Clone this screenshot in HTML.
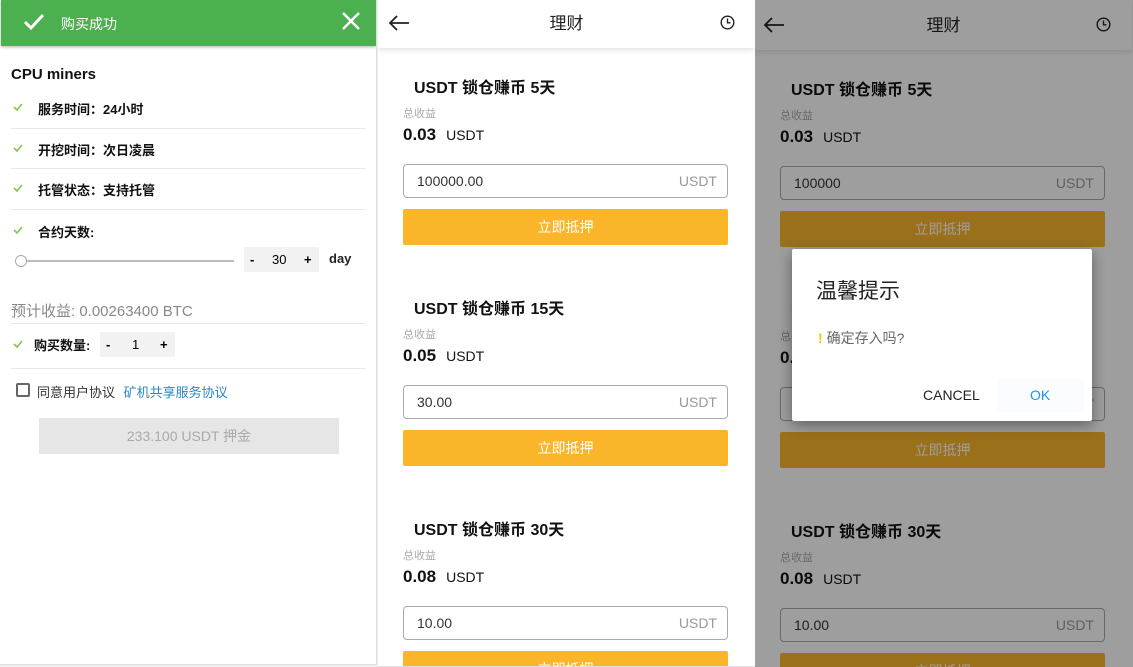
<!DOCTYPE html>
<html><head><meta charset="utf-8">
<style>
*{box-sizing:border-box;margin:0;padding:0}
body{width:1133px;height:667px;overflow:hidden;background:#f0f0f0;font-family:"Liberation Sans","Noto Sans CJK SC",sans-serif;position:relative}
.p{position:absolute;top:0;height:667px;background:#fff;overflow:hidden}
#L{left:0;width:377px;border-right:1px solid #ddd;border-bottom:1px solid #ddd;height:665px}
.gh{position:absolute;left:1px;top:0;width:375px;height:46px;background:#4caf50;box-shadow:0 1px 3px rgba(0,0,0,.3);color:#fff}
.gh .t{position:absolute;left:60px;top:14px;font-size:14px}
.row{position:absolute;left:11px;width:355px;font-size:13px;font-weight:bold;color:#111;border-bottom:1px solid #e8e8e8}
.ck{position:absolute;left:2px;width:10px;height:8px}
.row .tx{position:absolute;left:27px}
.stp{position:absolute;background:#f2f2f2;height:25px;font-size:13px;font-weight:bold}
.stp span{position:absolute;top:5px}
.card{position:absolute;left:25px;width:326px}
.ct{position:absolute;left:11px;font-size:16px;font-weight:bold;color:#111}
.cl{position:absolute;left:0;font-size:11px;color:#aaa}
.cv{position:absolute;left:0;font-size:14px;color:#111}
.cv b{font-size:17px;margin-right:10px}
.in{position:absolute;left:0;width:325px;height:34px;border:1px solid #aaa;border-radius:4px;font-size:14px}
.in .a{position:absolute;left:13px;top:8px;color:#333}
.in .u{position:absolute;right:10px;top:8px;color:#999}
.bt{position:absolute;left:0;width:325px;height:36px;background:#fbb52a;color:#fff;font-size:14px;text-align:center;line-height:36px;border-radius:2px}
.hd{position:absolute;left:0;top:0;width:377px;height:48px;background:#fff;box-shadow:0 2px 6px rgba(0,0,0,.12);z-index:2}
.hd .ti{position:absolute;left:0;width:377px;text-align:center;top:15px;font-size:17px;line-height:17px;color:#222}
</style></head><body>

<div class="p" id="L">
 <div class="gh">
  <svg style="position:absolute;left:22px;top:12px" width="22" height="20" viewBox="0 0 22 20"><path d="M2 10 L8 16 L20 3" stroke="#fff" stroke-width="3" fill="none"/></svg>
  <div class="t">购买成功</div>
  <svg style="position:absolute;left:341px;top:12px" width="18" height="18" viewBox="0 0 18 18"><path d="M1 1L17 17M17 1L1 17" stroke="#fff" stroke-width="2.5"/></svg>
 </div>
 <div style="position:absolute;left:11px;top:66px;font-size:15px;font-weight:bold;color:#111">CPU miners</div>
 <div class="row" style="top:96px;height:33px"><svg class="ck" style="top:7px" viewBox="0 0 10 8"><path d="M1 4L4 7L9 1" stroke="#8bc34a" stroke-width="1.6" fill="none"/></svg><span class="tx" style="top:3px">服务时间：24小时</span></div>
 <div class="row" style="top:137px;height:32px"><svg class="ck" style="top:7px" viewBox="0 0 10 8"><path d="M1 4L4 7L9 1" stroke="#8bc34a" stroke-width="1.6" fill="none"/></svg><span class="tx" style="top:3px">开挖时间：次日凌晨</span></div>
 <div class="row" style="top:177px;height:33px"><svg class="ck" style="top:7px" viewBox="0 0 10 8"><path d="M1 4L4 7L9 1" stroke="#8bc34a" stroke-width="1.6" fill="none"/></svg><span class="tx" style="top:3px">托管状态：支持托管</span></div>
 <div class="row" style="top:220px;height:20px;border:none"><svg class="ck" style="top:6px" viewBox="0 0 10 8"><path d="M1 4L4 7L9 1" stroke="#8bc34a" stroke-width="1.6" fill="none"/></svg><span class="tx" style="top:2px">合约天数:</span></div>
 <div style="position:absolute;left:20px;top:260px;width:214px;height:2px;background:#bbb"></div>
 <div style="position:absolute;left:15px;top:255px;width:12px;height:12px;border-radius:50%;border:1.5px solid #aaa;background:#fff"></div>
 <div class="stp" style="left:244px;top:247px;width:75px"><span style="left:6px">-</span><span style="left:28px;font-weight:normal">30</span><span style="left:60px">+</span></div>
 <div style="position:absolute;left:329px;top:251px;font-size:13px;font-weight:bold;color:#222">day</div>
 <div class="row" style="top:299px;height:25px;font-weight:normal;color:#888;font-size:15px;left:11px"><span style="position:absolute;left:0;top:1px">预计收益: 0.00263400 BTC</span></div>
 <div class="row" style="top:325px;height:44px"><svg class="ck" style="top:15px" viewBox="0 0 10 8"><path d="M1 4L4 7L9 1" stroke="#8bc34a" stroke-width="1.6" fill="none"/></svg><span class="tx" style="top:10px;left:23px">购买数量:</span></div>
 <div class="stp" style="left:100px;top:332px;width:75px"><span style="left:6px">-</span><span style="left:32px;font-weight:normal">1</span><span style="left:60px">+</span></div>
 <div style="position:absolute;left:16px;top:383px;width:14px;height:14px;border:2px solid #666;border-radius:2px"></div>
 <div style="position:absolute;left:37px;top:382px;font-size:13px;color:#333">同意用户协议 <span style="color:#2a86c8;margin-left:5px">矿机共享服务协议</span></div>
 <div style="position:absolute;left:39px;top:418px;width:300px;height:36px;background:#e6e6e6;color:#aaa;font-size:14px;text-align:center;line-height:36px">233.100 USDT 押金</div>
</div>

<div class="p" id="M" style="left:378px;width:377px;border-bottom:1px solid #e0e0e0">
 <div class="hd">
  <svg style="position:absolute;left:10px;top:14px" width="22" height="18" viewBox="0 0 22 18"><path d="M21 9H2M9 2L2 9L9 16" stroke="#222" stroke-width="1.8" fill="none"/></svg>
  <div class="ti">理财</div>
  <svg style="position:absolute;left:342px;top:15px" width="15" height="15" viewBox="0 0 15 15"><circle cx="7.5" cy="7.5" r="6.3" stroke="#222" stroke-width="1.4" fill="none"/><path d="M7.5 3.5V7.8H10.5" stroke="#222" stroke-width="1.4" fill="none"/></svg>
 </div>
 <div class="card" style="top:0"><div class="ct" style="top:74px">USDT 锁仓赚币 5天</div><div class="cl" style="top:105px">总收益</div><div class="cv" style="top:125px"><b>0.03</b>USDT</div><div class="in" style="top:164px"><span class="a">100000.00</span><span class="u">USDT</span></div><div class="bt" style="top:209px">立即抵押</div></div>
 <div class="card" style="top:221px"><div class="ct" style="top:74px">USDT 锁仓赚币 15天</div><div class="cl" style="top:105px">总收益</div><div class="cv" style="top:125px"><b>0.05</b>USDT</div><div class="in" style="top:164px"><span class="a">30.00</span><span class="u">USDT</span></div><div class="bt" style="top:209px">立即抵押</div></div>
 <div class="card" style="top:442px"><div class="ct" style="top:74px">USDT 锁仓赚币 30天</div><div class="cl" style="top:105px">总收益</div><div class="cv" style="top:125px"><b>0.08</b>USDT</div><div class="in" style="top:164px"><span class="a">10.00</span><span class="u">USDT</span></div><div class="bt" style="top:209px">立即抵押</div></div>
</div>

<div class="p" id="R" style="left:755px;width:378px">
 <div class="hd" style="height:50px">
  <svg style="position:absolute;left:8px;top:16px" width="22" height="18" viewBox="0 0 22 18"><path d="M21 9H2M9 2L2 9L9 16" stroke="#222" stroke-width="1.8" fill="none"/></svg>
  <div class="ti" style="top:17px">理财</div>
  <svg style="position:absolute;left:341px;top:17px" width="15" height="15" viewBox="0 0 15 15"><circle cx="7.5" cy="7.5" r="6.3" stroke="#222" stroke-width="1.4" fill="none"/><path d="M7.5 3.5V7.8H10.5" stroke="#222" stroke-width="1.4" fill="none"/></svg>
 </div>
 <div class="card" style="top:2px"><div class="ct" style="top:74px">USDT 锁仓赚币 5天</div><div class="cl" style="top:105px">总收益</div><div class="cv" style="top:125px"><b>0.03</b>USDT</div><div class="in" style="top:164px"><span class="a">100000</span><span class="u">USDT</span></div><div class="bt" style="top:209px">立即抵押</div></div>
 <div class="card" style="top:223px"><div class="ct" style="top:74px">USDT 锁仓赚币 15天</div><div class="cl" style="top:105px">总收益</div><div class="cv" style="top:125px"><b>0.05</b>USDT</div><div class="in" style="top:164px"><span class="a">30</span><span class="u">USDT</span></div><div class="bt" style="top:209px">立即抵押</div></div>
 <div class="card" style="top:444px"><div class="ct" style="top:74px">USDT 锁仓赚币 30天</div><div class="cl" style="top:105px">总收益</div><div class="cv" style="top:125px"><b>0.08</b>USDT</div><div class="in" style="top:164px"><span class="a">10.00</span><span class="u">USDT</span></div><div class="bt" style="top:209px">立即抵押</div></div>
 <div style="position:absolute;left:0;top:0;width:378px;height:667px;background:rgba(0,0,0,.38);z-index:3"></div>
 <div style="position:absolute;left:37px;top:249px;width:300px;height:172px;background:#fff;border-radius:2px;box-shadow:0 4px 14px rgba(0,0,0,.4);z-index:4">
  <div style="position:absolute;left:24px;top:26px;font-size:21px;color:#222">温馨提示</div>
  <div style="position:absolute;left:26px;top:79px;font-size:14px;color:#666"><span style="color:#f7c600;font-weight:bold;margin-right:4px">!</span>确定存入吗?</div>
  <div style="position:absolute;left:131px;top:138px;font-size:14px;color:#222">CANCEL</div>
  <div style="position:absolute;left:205px;top:129px;width:87px;height:34px;background:#fafcff"></div>
  <div style="position:absolute;left:238px;top:138px;font-size:14px;color:#2196f3">OK</div>
 </div>
</div>
</body></html>
